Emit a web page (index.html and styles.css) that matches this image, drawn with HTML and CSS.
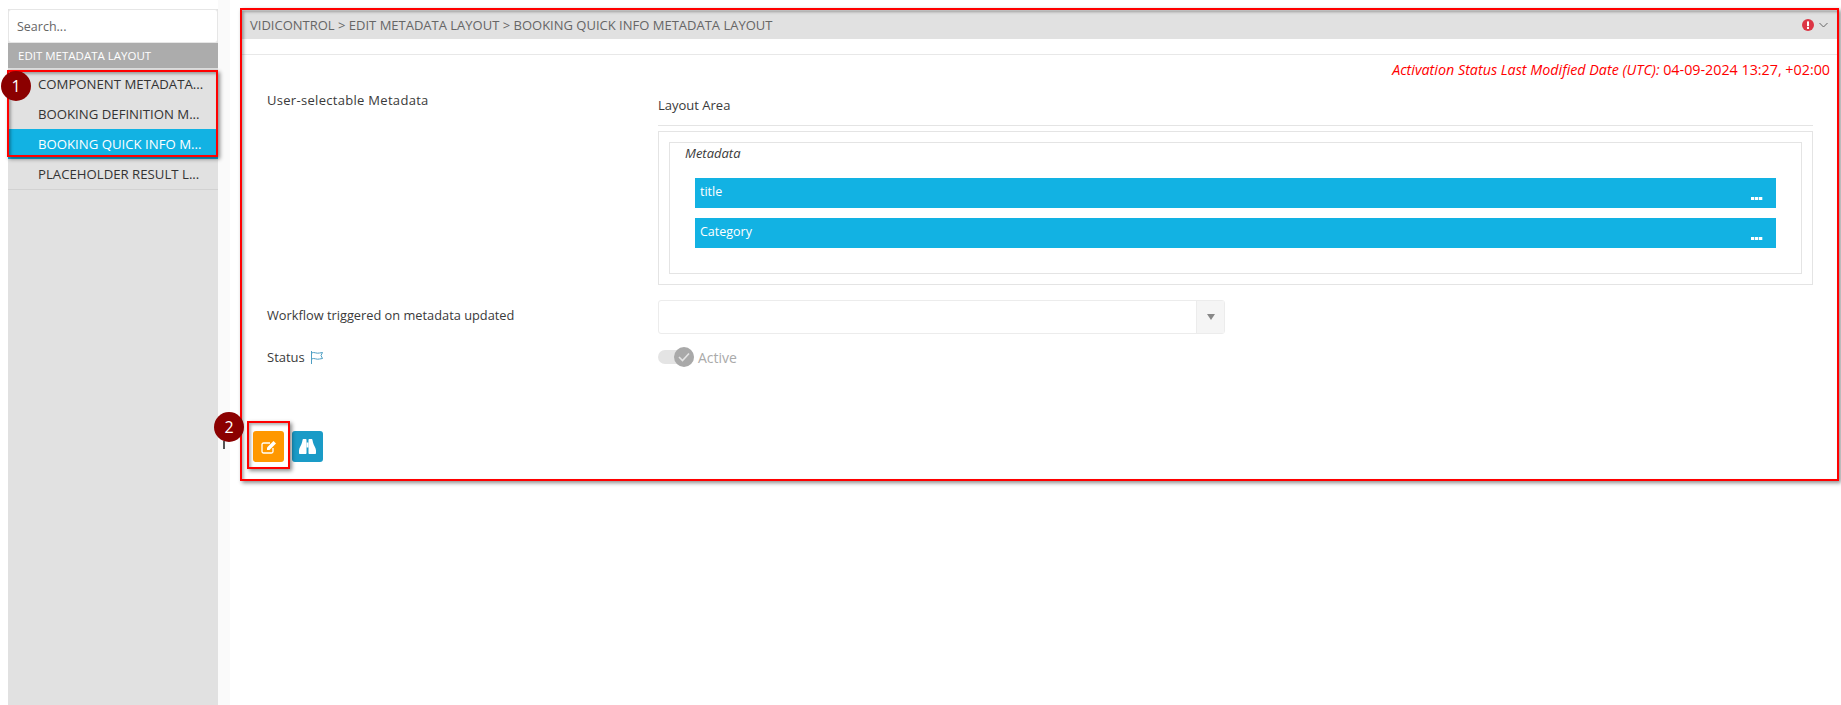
FILE: index.html
```html
<!DOCTYPE html>
<html>
<head>
	<title>Edit Metadata Layout</title>
	<link rel="stylesheet" href="styles.css">
</head>
<body>
	<div class="page">
		<div class="side_col">
			<div class="sidebar">
				<input class="search" type="text" placeholder="Search...">
				<div class="side_head">EDIT METADATA LAYOUT</div>
				<div class="side_item">COMPONENT METADATA...</div>
				<div class="side_item">BOOKING DEFINITION M...</div>
				<div class="side_item selected">BOOKING QUICK INFO M...</div>
				<div class="side_item last">PLACEHOLDER RESULT L...</div>
			</div>
		</div>

		<div class="main">
			<div class="crumbs">
				<span>VIDICONTROL &gt; EDIT METADATA LAYOUT &gt; BOOKING QUICK INFO METADATA LAYOUT</span>
				<div class="crumb_icons">
					<svg width="12" height="12" viewBox="0 0 12 12"><circle cx="6" cy="6" r="6" fill="#dc3545"/><rect x="5" y="2.400" width="2" height="4.800" fill="#fff"/><rect x="5" y="8" width="2" height="2" fill="#fff"/></svg>
					<svg width="9" height="6" viewBox="0 0 9 6"><path d="M.5 1l4 4 4-4" fill="none" stroke="#666" stroke-width="1"/></svg>
				</div>
			</div>
			<div class="crumb_gap"></div>

			<div class="modified"><em>Activation Status Last Modified Date (UTC):</em> 04-09-2024 13:27, +02:00</div>

			<div class="row top">
				<div class="label">User-selectable Metadata</div>
				<div class="field">
					<div class="area_title">Layout Area</div>
					<div class="area">
						<div class="group">
							<div class="group_title">Metadata</div>
							<div class="bar"><span>title</span><i class="dots"></i></div>
							<div class="bar"><span>Category</span><i class="dots"></i></div>
						</div>
					</div>
				</div>
			</div>

			<div class="row workflow">
				<div class="label">Workflow triggered on metadata updated</div>
				<div class="combo">
					<div class="combo_arrow"></div>
				</div>
			</div>

			<div class="row status">
				<div class="label">Status
					<svg class="flag" width="14" height="13" viewBox="0 0 14 13"><path d="M1.500 0v13M1.500 2c3-1.500 5 1 8 0l3-.5-1.500 3 1.500 3-3 .5c-3 1-5-1.500-8 0" fill="none" stroke="#4f9fc4" stroke-width="1"/></svg>
				</div>
				<div class="toggle_wrap">
					<div class="toggle">
						<div class="knob">
							<svg width="12" height="10" viewBox="0 0 12 10"><path d="M1 5l3.500 3.500L11 1.500" fill="none" stroke="#e4e4e4" stroke-width="1.600"/></svg>
						</div>
					</div>
					<span class="toggle_text">Active</span>
				</div>
			</div>

			<div class="buttons">
				<div class="btn orange">
					<svg width="16" height="14" viewBox="0 0 16 14"><path d="M12 8v3.500a1.500 1.500 0 0 1-1.500 1.500H2.500A1.500 1.500 0 0 1 1 11.500V4.500A1.500 1.500 0 0 1 2.500 3H9" fill="none" stroke="#fff" stroke-width="1.300"/><path d="M6 7.500L12.500 1 15 3.500 8.500 10H6z" fill="#fff"/></svg>
				</div>
				<div class="btn blue">
					<svg width="17" height="15" viewBox="0 0 17 15"><path d="M3.500 1.200C3.500.5 4 0 4.700 0h2c.5 0 .8.400.8.800V14c0 .6-.4 1-1 1H1c-.6 0-1-.4-1-1v-2.500C0 9 2.500 6 3 3.500z" fill="#fff"/><path d="M13.500 1.200C13.500.5 13 0 12.300 0h-2c-.5 0-.8.400-.8.800V14c0 .6.400 1 1 1H16c.6 0 1-.4 1-1v-2.500C17 9 14.500 6 14 3.500z" fill="#fff"/><rect x="7.500" y="3.500" width="2" height="5" fill="#fff"/></svg>
				</div>
			</div>
		</div>
	</div>

	<!-- annotations on top of the screenshot -->
	<div class="mark mark_side"></div>
	<div class="mark mark_main"></div>
	<div class="mark mark_btn"></div>
	<div class="badge badge_one">1</div>
	<div class="badge badge_two">2</div>
	<div class="pin"></div>
</body>
</html>
```

FILE: styles.css
```css
html, body {
	height: 100%;
}
body {
	margin: 0;
	font-family: "Open Sans", "Noto Sans", sans-serif;
	font-size: 13px;
	color: #3a3a3a;
	background-color: white;
	overflow: hidden;
}
.page {
	display: flex;
	height: 100%;
	padding-left: 8px;
	box-sizing: border-box;
}

.side_col {
	width: 210px;
	flex-shrink: 0;
	padding-top: 9px;
	border-right: 12px solid #fafafa;
	display: flex;
}
.sidebar {
	flex: 1;
	background-color: #e1e1e1;
	display: flex;
	flex-direction: column;
}
.search {
	height: 34px;
	box-sizing: border-box;
	margin: 0;
	padding: 0 8px;
	border: 1px solid #e6e6e6;
	border-radius: 3px;
	background-color: white;
	font-family: inherit;
	font-size: 12.5px;
	outline: none;
}
.search::placeholder {
	color: #666;
	opacity: 1;
}
.side_head {
	height: 25px;
	line-height: 25px;
	margin-bottom: 1px;
	padding-left: 10px;
	background-color: #acacac;
	color: white;
	font-size: 11.5px;
}
.side_item {
	height: 30px;
	line-height: 30px;
	padding-left: 30px;
	font-size: 13.2px;
	color: #333;
	white-space: nowrap;
	overflow: hidden;
}
.selected {
	background-color: #12b2e3;
	color: white;
}
.last {
	border-bottom: 1px solid #d2d2d2;
}

.main {
	flex: 1;
	margin: 11px 4px 0 11px;
	min-width: 0;
}
.crumbs {
	height: 28px;
	padding: 0 9px 0 9px;
	background-color: #e1e1e1;
	color: #666;
	display: flex;
	align-items: center;
	justify-content: space-between;
}
.crumb_icons {
	display: flex;
	align-items: center;
	gap: 5px;
}
.crumb_gap {
	height: 15px;
	border-bottom: 1px solid #e8e8e8;
}
.modified {
	margin-top: 6px;
	padding-right: 7px;
	text-align: right;
	font-size: 14.3px;
	line-height: 18px;
	color: #f00;
}

.row {
	display: flex;
}
.label {
	width: 404px;
	flex-shrink: 0;
	padding-left: 26px;
	box-sizing: border-box;
	font-weight: 500;
}
.top {
	margin-top: 11px;
}
.top .label {
	padding-top: 1px;
	letter-spacing: 0.3px;
}
.field {
	width: 1155px;
	margin-left: 13px;
	flex-shrink: 0;
}
.area_title {
	line-height: 20px;
	padding: 5px 0 10px 0;
	font-weight: 500;
	border-bottom: 1px solid #e4e4e4;
}
.area {
	margin-top: 5px;
	padding: 10px;
	border: 1px solid #e4e4e4;
}
.group {
	border: 1px solid #e4e4e4;
	padding: 0 25px 15px 25px;
}
.group_title {
	font-style: italic;
	height: 35px;
	line-height: 20px;
	margin-left: -10px;
	font-weight: 500;
}
.bar {
	height: 30px;
	margin-bottom: 10px;
	padding: 0 13px 0 5px;
	background-color: #12b2e3;
	color: white;
	display: flex;
	justify-content: space-between;
	line-height: 28px;
	font-size: 12.5px;
}
.dots {
	width: 12px;
	height: 3px;
	margin-top: 19px;
	background-image: repeating-linear-gradient(to right, white 0, white 3px, #5cc9ec 3px, #5cc9ec 4px);
}

.workflow {
	margin-top: 15px;
	align-items: center;
}
.workflow .label {
	padding-bottom: 4px;
	font-size: 12.8px;
}
.combo {
	width: 567px;
	height: 34px;
	margin-left: 13px;
	box-sizing: border-box;
	border: 1px solid #ececec;
	border-radius: 3px;
	display: flex;
	justify-content: flex-end;
}
.combo_arrow {
	width: 27px;
	background-color: #f5f5f5;
	border-left: 1px solid #ececec;
	display: flex;
	align-items: center;
	justify-content: center;
}
.combo_arrow:after {
	content: "";
	border-left: 4px solid transparent;
	border-right: 4px solid transparent;
	border-top: 6px solid #888;
}

.status {
	margin-top: 13px;
	height: 20px;
	align-items: center;
}
.flag {
	margin-left: 2px;
	vertical-align: -2px;
}
.toggle_wrap {
	margin-left: 13px;
	display: flex;
	align-items: center;
	gap: 4px;
}
.toggle {
	width: 36px;
	height: 14px;
	border-radius: 7px;
	background-color: #e4e4e4;
	position: relative;
}
.knob {
	position: absolute;
	right: 0;
	top: -3px;
	width: 20px;
	height: 20px;
	border-radius: 50%;
	background-color: #a9a9a9;
	display: flex;
	align-items: center;
	justify-content: center;
}
.toggle_text {
	color: #aaa;
	font-size: 14px;
}

.buttons {
	display: flex;
	gap: 8px;
	margin-top: 64px;
	padding-left: 12px;
}
.btn {
	width: 31px;
	height: 31px;
	border-radius: 3px;
	display: flex;
	align-items: center;
	justify-content: center;
}
.orange {
	background-color: #ff9800;
}
.blue {
	background-color: #1a9bc7;
}

.mark {
	position: absolute;
	box-sizing: border-box;
	border: 2px solid #f00;
	box-shadow: 2px 2px 4px rgba(0, 0, 0, 0.45), inset 2px 2px 3px rgba(0, 0, 0, 0.3);
}
.mark_side {
	left: 7px;
	top: 70px;
	width: 211px;
	height: 87px;
}
.mark_main {
	left: 240px;
	top: 8px;
	width: 1599px;
	height: 473px;
}
.mark_btn {
	left: 247px;
	top: 421px;
	width: 43px;
	height: 48px;
}
.badge {
	position: absolute;
	width: 30px;
	height: 30px;
	border-radius: 50%;
	background-color: #8b0000;
	color: white;
	font-size: 16px;
	line-height: 30px;
	text-align: center;
}
.badge_one {
	left: 1px;
	top: 71px;
}
.badge_two {
	left: 214px;
	top: 412px;
}
.pin {
	position: absolute;
	left: 223px;
	top: 441px;
	width: 2px;
	height: 8px;
	background-color: #555;
}
```
